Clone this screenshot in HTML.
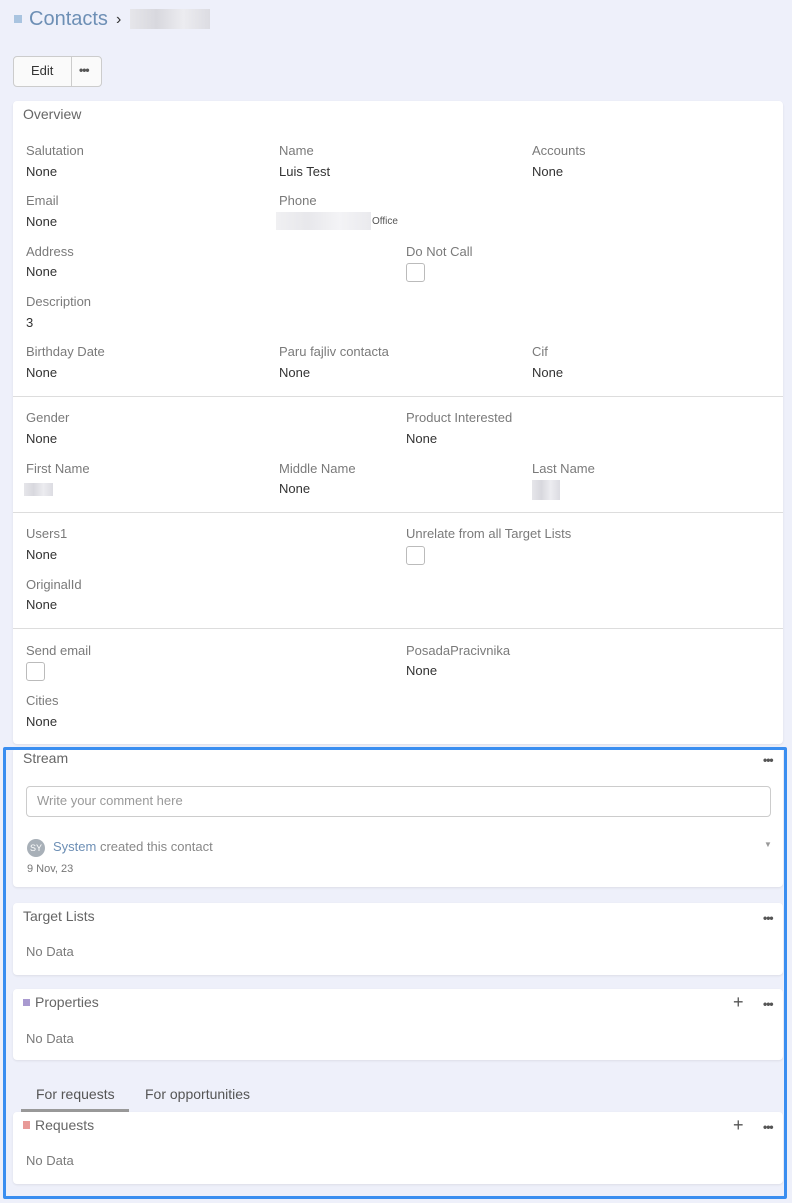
<!DOCTYPE html>
<html><head><style>
*{margin:0;padding:0;box-sizing:border-box}
body{width:792px;height:1203px;background:#eef0fa;font-family:"Liberation Sans",sans-serif;position:relative;overflow:hidden;font-size:13px;color:#333}
.a{position:absolute;white-space:nowrap}
.l{color:#7a7a7a}
.p{position:absolute;left:13px;width:770px;background:#fff;border-radius:4px;box-shadow:0 1px 2px rgba(0,0,0,.08)}
.hr{position:absolute;left:13px;width:770px;height:1px;background:#ddd}
.cb{position:absolute;width:19px;height:19px;border:1px solid #bbb;border-radius:3px;background:#fff}
.h{color:#666;font-size:14px}
.dots{color:#555;font-size:12px;letter-spacing:-1px;font-weight:bold}
.blur{position:absolute;background:linear-gradient(90deg,#e6e6ea,#d8d8de,#ececf0,#dcdce2)}
</style></head><body>
<div class="a" style="left:14px;top:15px;width:8px;height:8px;background:#a9c4e0"></div>
<div class="a" style="left:29px;top:8px;font-size:20px;color:#6d8fb5">Contacts</div>
<div class="a" style="left:116px;top:11px;font-size:16px;color:#333">›</div>
<div class="blur" style="left:130px;top:9px;width:80px;height:20px"></div>
<div class="a" style="left:13px;top:56px;width:89px;height:31px;border:1px solid #ccc;border-radius:4px;background:#fafafa"></div>
<div class="a" style="left:71px;top:57px;width:1px;height:29px;background:#ccc"></div>
<div class="a" style="left:31px;top:63px;color:#333">Edit</div>
<div class="a dots" style="left:79px;top:63px">•••</div>

<div class="p" style="top:101px;height:643px"></div>
<div class="a h" style="left:23px;top:106px">Overview</div>
<div class="a l" style="left:26px;top:143px">Salutation</div><div class="a" style="left:26px;top:164px">None</div>
<div class="a l" style="left:279px;top:143px">Name</div><div class="a" style="left:279px;top:164px">Luis Test</div>
<div class="a l" style="left:532px;top:143px">Accounts</div><div class="a" style="left:532px;top:164px">None</div>
<div class="a l" style="left:26px;top:193px">Email</div><div class="a" style="left:26px;top:214px">None</div>
<div class="a l" style="left:279px;top:193px">Phone</div><div class="blur" style="left:276px;top:212px;width:95px;height:18px;opacity:.6"></div><div class="a" style="left:372px;top:216px;font-size:10px;color:#555">Office</div>
<div class="a l" style="left:26px;top:244px">Address</div><div class="a" style="left:26px;top:264px">None</div>
<div class="a l" style="left:406px;top:244px">Do Not Call</div><div class="cb" style="left:406px;top:263px"></div>
<div class="a l" style="left:26px;top:294px">Description</div><div class="a" style="left:26px;top:315px">3</div>
<div class="a l" style="left:26px;top:344px">Birthday Date</div><div class="a" style="left:26px;top:365px">None</div>
<div class="a l" style="left:279px;top:344px">Paru fajliv contacta</div><div class="a" style="left:279px;top:365px">None</div>
<div class="a l" style="left:532px;top:344px">Cif</div><div class="a" style="left:532px;top:365px">None</div>
<div class="hr" style="top:396px"></div>
<div class="a l" style="left:26px;top:410px">Gender</div><div class="a" style="left:26px;top:431px">None</div>
<div class="a l" style="left:406px;top:410px">Product Interested</div><div class="a" style="left:406px;top:431px">None</div>
<div class="a l" style="left:26px;top:461px">First Name</div><div class="blur" style="left:24px;top:483px;width:29px;height:13px"></div>
<div class="a l" style="left:279px;top:461px">Middle Name</div><div class="a" style="left:279px;top:481px">None</div>
<div class="a l" style="left:532px;top:461px">Last Name</div><div class="blur" style="left:532px;top:480px;width:28px;height:20px"></div>
<div class="hr" style="top:512px"></div>
<div class="a l" style="left:26px;top:526px">Users1</div><div class="a" style="left:26px;top:547px">None</div>
<div class="a l" style="left:406px;top:526px">Unrelate from all Target Lists</div><div class="cb" style="left:406px;top:546px"></div>
<div class="a l" style="left:26px;top:577px">OriginalId</div><div class="a" style="left:26px;top:597px">None</div>
<div class="hr" style="top:628px"></div>
<div class="a l" style="left:26px;top:643px">Send email</div><div class="cb" style="left:26px;top:662px"></div>
<div class="a l" style="left:406px;top:643px">PosadaPracivnika</div><div class="a" style="left:406px;top:663px">None</div>
<div class="a l" style="left:26px;top:693px">Cities</div><div class="a" style="left:26px;top:714px">None</div>

<div class="p" style="top:748px;height:139px"></div>
<div class="a h" style="left:23px;top:750px">Stream</div>
<div class="a dots" style="left:763px;top:753px">•••</div>
<div class="a" style="left:26px;top:786px;width:745px;height:31px;border:1px solid #ccc;border-radius:4px"></div>
<div class="a" style="left:37px;top:793px;color:#999">Write your comment here</div>
<div class="a" style="left:27px;top:839px;width:18px;height:18px;border-radius:50%;background:#a8b0b8;color:#fff;font-size:9px;text-align:center;line-height:18px">SY</div>
<div class="a" style="left:53px;top:839px;color:#6d8fb5">System <span style="color:#888">created this contact</span></div>
<div class="a" style="left:764px;top:840px;color:#999;font-size:8px">▼</div>
<div class="a" style="left:27px;top:863px;color:#777;font-size:11px">9 Nov, 23</div>

<div class="p" style="top:903px;height:72px"></div>
<div class="a h" style="left:23px;top:908px">Target Lists</div>
<div class="a dots" style="left:763px;top:911px">•••</div>
<div class="a l" style="left:26px;top:944px">No Data</div>

<div class="p" style="top:989px;height:71px"></div>
<div class="a" style="left:23px;top:999px;width:7px;height:7px;background:#a99ad0"></div>
<div class="a h" style="left:35px;top:994px">Properties</div>
<div class="a" style="left:733px;top:992px;font-size:18px;color:#555">+</div>
<div class="a dots" style="left:763px;top:997px">•••</div>
<div class="a l" style="left:26px;top:1031px">No Data</div>

<div class="a" style="left:36px;top:1086px;font-size:14px;color:#555">For requests</div>
<div class="a" style="left:145px;top:1086px;font-size:14px;color:#555">For opportunities</div>
<div class="a" style="left:21px;top:1109px;width:108px;height:3px;background:#999"></div>

<div class="p" style="top:1112px;height:72px"></div>
<div class="a" style="left:23px;top:1121px;width:7px;height:8px;background:#e89a98"></div>
<div class="a h" style="left:35px;top:1117px">Requests</div>
<div class="a" style="left:733px;top:1115px;font-size:18px;color:#555">+</div>
<div class="a dots" style="left:763px;top:1120px">•••</div>
<div class="a l" style="left:26px;top:1153px">No Data</div>

<div class="a" style="left:3px;top:747px;width:784px;height:452px;border:3px solid #3a8ef0;border-radius:2px"></div>
</body></html>
